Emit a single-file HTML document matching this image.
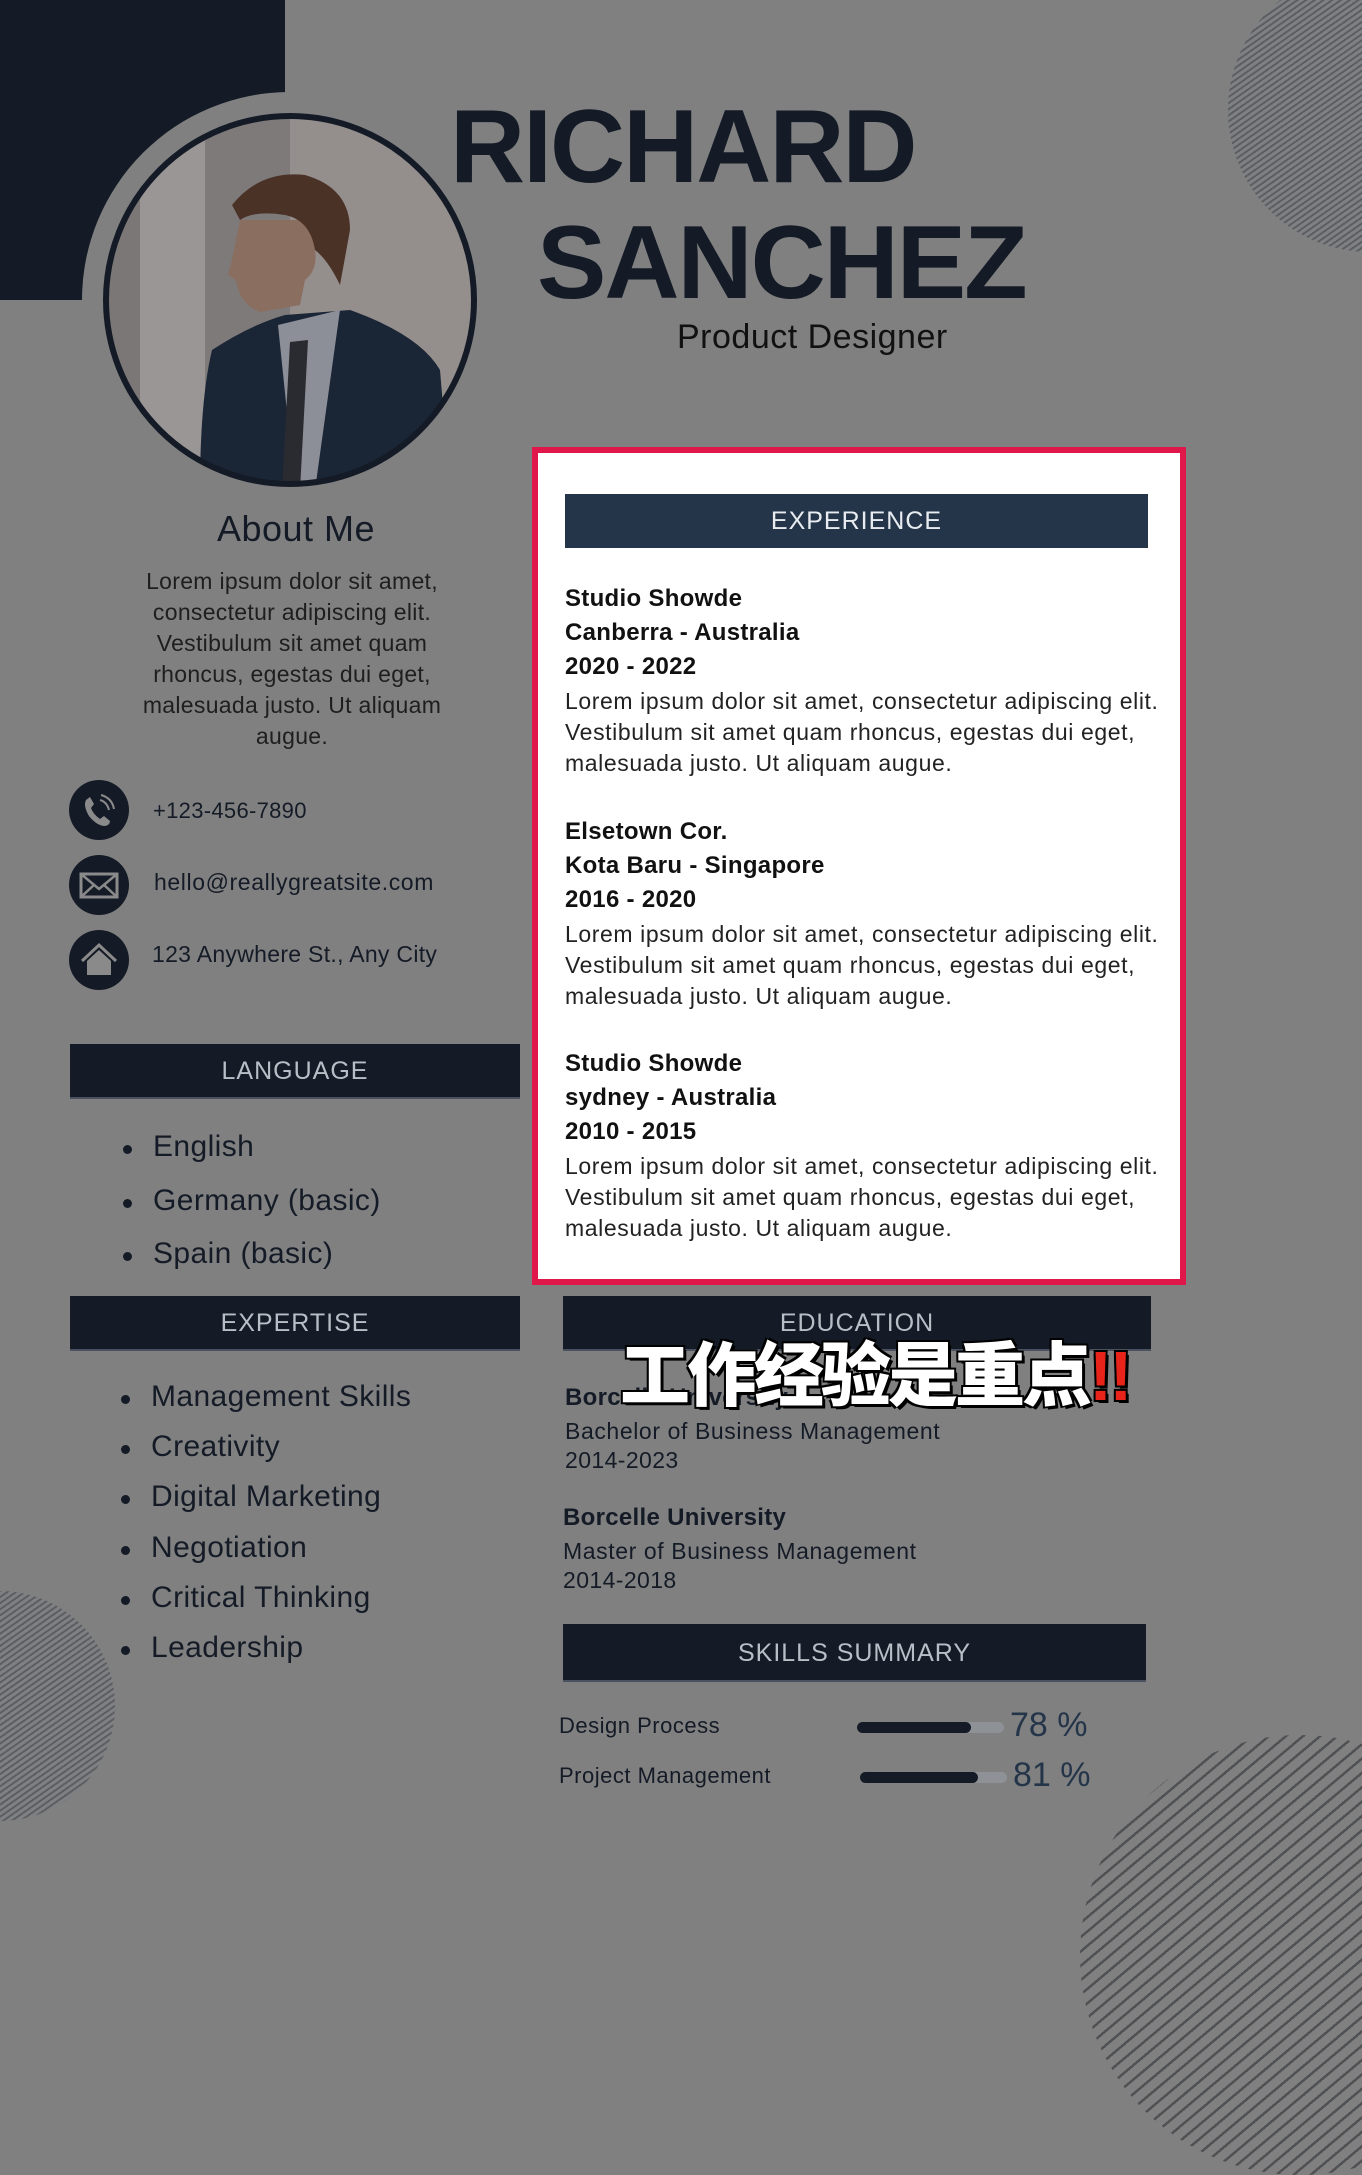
<!DOCTYPE html>
<html><head><meta charset="utf-8"><style>
*{margin:0;padding:0;box-sizing:border-box}
body{width:1362px;height:1920px;background:#808080;position:relative;overflow:hidden;font-family:"Liberation Sans",sans-serif;color:#141b26}
.a{position:absolute}
.bar{position:absolute;color:#b9bec6;font-size:25px;text-align:center;letter-spacing:1px;background:#141b26;border-bottom:2px solid #4a5260}
.stripe{position:absolute;border-radius:50%;background:repeating-linear-gradient(145deg,#5c5e61 0 2px,#7f8083 2px 5px)}
.t{position:absolute;white-space:nowrap}
.li{position:absolute;font-size:30px;letter-spacing:0.4px;white-space:nowrap}
.li:before{content:"";position:absolute;left:-30px;top:15px;width:9px;height:9px;border-radius:50%;background:#141b26}
.exp b{display:block;font-size:24px;line-height:34px;color:#111;letter-spacing:0.3px}
.exp p{font-size:23px;letter-spacing:0.6px;line-height:31px;color:#222;margin-top:2px}
</style></head><body>
<div class="stripe" style="left:1228px;top:-32px;width:284px;height:284px"></div>
<div class="stripe" style="left:-115px;top:1591px;width:230px;height:230px"></div>
<div class="stripe" style="left:1080px;top:1735px;width:440px;height:440px;background:repeating-linear-gradient(140deg,#4f5154 0 2.5px,#808080 2.5px 11px)"></div>
<div class="a" style="left:0;top:0;width:285px;height:300px;background:#141b26"></div>
<div class="a" style="left:82px;top:92px;width:416px;height:416px;border-radius:50%;background:#808080"></div>
<svg class="a" style="left:100px;top:110px" width="380" height="380" viewBox="0 0 380 380">
<defs><clipPath id="c"><circle cx="190" cy="190" r="184"/></clipPath></defs>
<g clip-path="url(#c)">
<rect width="380" height="380" fill="#8f8a88"/>
<rect x="0" y="0" width="40" height="380" fill="#7a7776"/>
<rect x="40" y="0" width="65" height="380" fill="#9a9696"/>
<rect x="105" y="0" width="85" height="380" fill="#7e7a7a"/>
<rect x="190" y="0" width="190" height="380" fill="#948e8c"/>
<path d="M112 240 Q150 215 185 205 L250 200 Q320 225 340 260 L350 380 L100 380 Q100 290 112 240Z" fill="#1a2536"/>
<path d="M178 215 L240 200 L215 380 L195 380Z" fill="#8d8f98"/>
<path d="M190 232 L208 230 L200 380 L182 380Z" fill="#2a2b30"/>
<path d="M132 150 L128 165 L136 170 Q140 195 160 202 L200 195 L205 170 Q218 160 215 140 L210 110 L140 110Z" fill="#8a6e60"/>
<path d="M132 95 Q160 60 205 65 Q250 78 250 120 L240 175 Q228 150 215 140 Q210 110 185 105 Q155 100 140 110Z" fill="#4a3226"/>
</g>
<circle cx="190" cy="190" r="184" fill="none" stroke="#141b26" stroke-width="6"/>
</svg>
<div class="t" style="left:450px;top:92px;font-size:104px;font-weight:bold;letter-spacing:-2px;line-height:110px">RICHARD</div>
<div class="t" style="left:537px;top:208px;font-size:104px;font-weight:bold;letter-spacing:-2px;line-height:110px">SANCHEZ</div>
<div class="t" style="left:677px;top:318px;font-size:34px;color:#111;letter-spacing:0.5px">Product Designer</div>

<div class="t" style="left:0;width:592px;top:508px;text-align:center;font-size:36px;letter-spacing:0.5px">About Me</div>
<div class="a" style="left:122px;width:340px;top:566px;text-align:center;font-size:23px;letter-spacing:0.3px;line-height:31px;color:#1e1e1e">Lorem ipsum dolor sit amet, consectetur adipiscing elit. Vestibulum sit amet quam rhoncus, egestas dui eget, malesuada justo. Ut aliquam augue.</div>

<svg class="a" style="left:69px;top:780px" width="62" height="212" viewBox="0 0 62 212">
<circle cx="30" cy="30" r="30" fill="#141b26"/><circle cx="30" cy="105" r="30" fill="#141b26"/><circle cx="30" cy="180" r="30" fill="#141b26"/>
<path d="M17 20 Q14 26 20 36 Q28 46 36 46 Q41 45 41 41 L35 36 L31 39 Q24 34 22 28 L25 24 L21 17Z" fill="#8a8a8a"/>
<path d="M31 20 Q38 22 40 30 M32 15 Q43 18 45 29" stroke="#8a8a8a" stroke-width="2" fill="none"/>
<rect x="12" y="94" width="36" height="23" fill="none" stroke="#8a8a8a" stroke-width="3"/>
<path d="M12 94 L30 109 L48 94 M12 117 L26 104 M48 117 L34 104" stroke="#8a8a8a" stroke-width="2.5" fill="none"/>
<path d="M13 181 L30 165 L47 181" stroke="#8a8a8a" stroke-width="3" fill="none"/>
<path d="M18 181 L30 170 L42 181 L42 195 L18 195Z" fill="#8a8a8a"/>
</svg>
<div class="t" style="left:153px;top:798px;font-size:22px;letter-spacing:0.3px">+123-456-7890</div>
<div class="t" style="left:154px;top:869px;font-size:23px;letter-spacing:0.6px">hello@reallygreatsite.com</div>
<div class="t" style="left:152px;top:941px;font-size:23px;letter-spacing:0.3px">123 Anywhere St., Any City</div>

<div class="bar" style="left:70px;top:1044px;width:450px;height:55px;line-height:55px">LANGUAGE</div>
<div class="li" style="left:153px;top:1130px">English</div>
<div class="li" style="left:153px;top:1184px">Germany (basic)</div>
<div class="li" style="left:153px;top:1237px">Spain (basic)</div>

<div class="bar" style="left:70px;top:1296px;width:450px;height:55px;line-height:55px">EXPERTISE</div>
<div class="li" style="left:151px;top:1380px">Management Skills</div>
<div class="li" style="left:151px;top:1430px">Creativity</div>
<div class="li" style="left:151px;top:1480px">Digital Marketing</div>
<div class="li" style="left:151px;top:1531px">Negotiation</div>
<div class="li" style="left:151px;top:1581px">Critical Thinking</div>
<div class="li" style="left:151px;top:1631px">Leadership</div>

<div class="a" style="left:532px;top:447px;width:654px;height:838px;background:#fff;border:6px solid #e0174a"></div>
<div class="bar" style="left:565px;top:494px;width:583px;height:54px;line-height:54px;background:#253549;color:#e8ecf0;border:none">EXPERIENCE</div>
<div class="a exp" style="left:565px;top:582px;width:618px">
<b>Studio Showde</b><b>Canberra - Australia</b><b>2020 - 2022</b>
<p>Lorem ipsum dolor sit amet, consectetur adipiscing elit. Vestibulum sit amet quam rhoncus, egestas dui eget, malesuada justo. Ut aliquam augue.</p>
</div>
<div class="a exp" style="left:565px;top:815px;width:618px">
<b>Elsetown Cor.</b><b>Kota Baru - Singapore</b><b>2016 - 2020</b>
<p>Lorem ipsum dolor sit amet, consectetur adipiscing elit. Vestibulum sit amet quam rhoncus, egestas dui eget, malesuada justo. Ut aliquam augue.</p>
</div>
<div class="a exp" style="left:565px;top:1047px;width:618px">
<b>Studio Showde</b><b>sydney - Australia</b><b>2010 - 2015</b>
<p>Lorem ipsum dolor sit amet, consectetur adipiscing elit. Vestibulum sit amet quam rhoncus, egestas dui eget, malesuada justo. Ut aliquam augue.</p>
</div>

<div class="bar" style="left:563px;top:1296px;width:588px;height:55px;line-height:55px">EDUCATION</div>
<div class="t" style="left:565px;top:1384px;font-size:24px;font-weight:bold;letter-spacing:0.3px">Borcelle University</div>
<div class="t" style="left:565px;top:1418px;font-size:23px;letter-spacing:0.6px">Bachelor of Business Management</div>
<div class="t" style="left:565px;top:1447px;font-size:23px;letter-spacing:0.4px">2014-2023</div>
<div class="t" style="left:563px;top:1504px;font-size:24px;font-weight:bold;letter-spacing:0.3px">Borcelle University</div>
<div class="t" style="left:563px;top:1538px;font-size:23px;letter-spacing:0.6px">Master of Business Management</div>
<div class="t" style="left:563px;top:1567px;font-size:23px;letter-spacing:0.4px">2014-2018</div>

<div class="bar" style="left:563px;top:1624px;width:583px;height:58px;line-height:58px">SKILLS SUMMARY</div>
<div class="t" style="left:559px;top:1713px;font-size:22px;letter-spacing:0.5px">Design Process</div>
<div class="a" style="left:857px;top:1722px;width:147px;height:11px;border-radius:6px;background:#8e9196"></div>
<div class="a" style="left:857px;top:1722px;width:114px;height:11px;border-radius:6px;background:#141b26"></div>
<div class="t" style="left:1010px;top:1706px;font-size:34px;color:#253549">78 %</div>
<div class="t" style="left:559px;top:1763px;font-size:22px;letter-spacing:0.5px">Project Management</div>
<div class="a" style="left:860px;top:1772px;width:147px;height:11px;border-radius:6px;background:#8e9196"></div>
<div class="a" style="left:860px;top:1772px;width:118px;height:11px;border-radius:6px;background:#141b26"></div>
<div class="t" style="left:1013px;top:1756px;font-size:34px;color:#253549">81 %</div>

<div class="t" style="left:620px;top:1320px;font-size:70px;font-weight:900;color:#fff;font-family:'Liberation Sans','Noto Sans CJK SC',sans-serif;text-shadow:3px 3px 0 #000,-2px -2px 0 #000,2px -2px 0 #000,-2px 2px 0 #000;letter-spacing:-3px">工作经验是重点<span style="color:#e8231a">!!</span></div>
</body></html>
